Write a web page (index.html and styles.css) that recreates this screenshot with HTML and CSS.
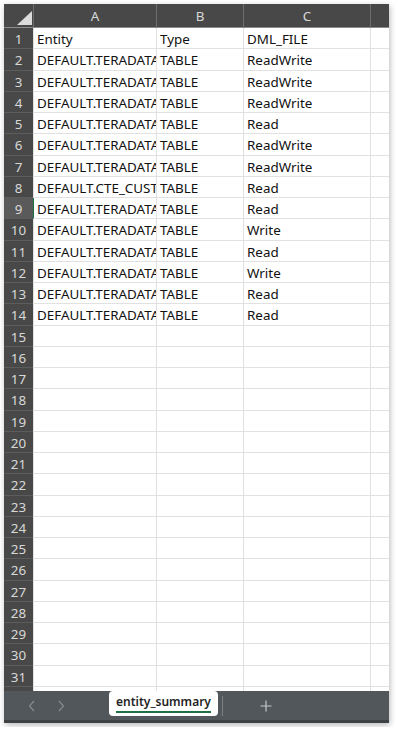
FILE: index.html
```html
<!DOCTYPE html>
<html>
<head>
    <title>entity_summary</title>
    <meta name="viewport" content="width=device-width, initial-scale=1.0">
    <link rel="stylesheet" href="styles.css">
</head>
<body>
    <div class="window">
        <div class="sheet" id="sheet">
            <!-- Column headers -->
            <div class="corner"><span class="corner-mark"></span></div>
            <div class="col-head">A</div>
            <div class="col-head">B</div>
            <div class="col-head">C</div>
            <div class="col-head"></div>
        </div>

        <div class="tab-bar">
            <div class="tab-nav">
                <svg width="8" height="12" viewBox="0 0 8 12"><path d="M6 1 L1.5 6 L6 11" fill="none" stroke="#878b8e" stroke-width="1.2"/></svg>
                <svg width="8" height="12" viewBox="0 0 8 12"><path d="M2 1 L6.5 6 L2 11" fill="none" stroke="#878b8e" stroke-width="1.2"/></svg>
            </div>
            <div class="tab"><span class="tab-label">entity_summary</span></div>
            <div class="tab-sep"></div>
            <div class="tab-add">
                <svg width="12" height="12" viewBox="0 0 12 12"><path d="M6 0.5 V11.5 M0.5 6 H11.5" stroke="#c4c7c9" stroke-width="1.2"/></svg>
            </div>
        </div>
        <div class="bottom-strip"></div>
    </div>

    <script>
        const rows = [
            ['Entity', 'Type', 'DML_FILE'],
            ['DEFAULT.TERADATA_TABLE', 'TABLE', 'ReadWrite'],
            ['DEFAULT.TERADATA_TABLE', 'TABLE', 'ReadWrite'],
            ['DEFAULT.TERADATA_TABLE', 'TABLE', 'ReadWrite'],
            ['DEFAULT.TERADATA_TABLE', 'TABLE', 'Read'],
            ['DEFAULT.TERADATA_TABLE', 'TABLE', 'ReadWrite'],
            ['DEFAULT.TERADATA_TABLE', 'TABLE', 'ReadWrite'],
            ['DEFAULT.CTE_CUSTOMER', 'TABLE', 'Read'],
            ['DEFAULT.TERADATA_TABLE', 'TABLE', 'Read'],
            ['DEFAULT.TERADATA_TABLE', 'TABLE', 'Write'],
            ['DEFAULT.TERADATA_TABLE', 'TABLE', 'Read'],
            ['DEFAULT.TERADATA_TABLE', 'TABLE', 'Write'],
            ['DEFAULT.TERADATA_TABLE', 'TABLE', 'Read'],
            ['DEFAULT.TERADATA_TABLE', 'TABLE', 'Read']
        ];
        const totalRows = 32;
        const activeRow = 9;

        const sheet = document.getElementById('sheet');
        for (let i = 1; i <= totalRows; i++) {
            const data = rows[i - 1] || ['', '', ''];

            const head = document.createElement('div');
            head.className = 'row-head' + (i === activeRow ? ' active' : '');
            head.textContent = i;
            sheet.appendChild(head);

            data.concat(['']).forEach((value, index) => {
                const cell = document.createElement('div');
                cell.className = 'cell';
                if (i === activeRow && index === 0) {
                    cell.classList.add('active');
                }
                cell.textContent = value;
                sheet.appendChild(cell);
            });
        }
    </script>
</body>
</html>
```

FILE: styles.css
```css
body {
    margin: 0;
    background: #ffffff;
    font-family: "Noto Sans", "Open Sans", sans-serif;
}

.window {
    margin: 4px;
    width: 385px;
    height: 719px;
    display: flex;
    flex-direction: column;
    background: #ffffff;
    box-shadow: 1px 2px 6px rgba(0, 0, 0, 0.28);
}

.sheet {
    height: 687px;
    overflow: hidden;
    display: grid;
    grid-template-columns: 29px 123px 87px 127px 19px;
    grid-auto-rows: 21.25px;
    grid-template-rows: 24px;
    font-size: 13.4px;
}

.corner {
    background: #484848;
    border-bottom: 1px solid #8c8c8c;
    position: relative;
}

.corner-mark {
    position: absolute;
    right: 1px;
    bottom: 2px;
    width: 0;
    height: 0;
    border-left: 15px solid transparent;
    border-bottom: 14px solid #dcdcdc;
}

.col-head {
    background: #484848;
    color: #d8d8d8;
    border-left: 1px solid #6c6c6c;
    border-bottom: 1px solid #8c8c8c;
    display: flex;
    align-items: center;
    justify-content: center;
    padding-top: 1px;
}

.row-head {
    background: #484848;
    color: #d8d8d8;
    border-bottom: 1px solid #5c5c5c;
    display: flex;
    align-items: center;
    justify-content: center;
    box-sizing: border-box;
    padding-top: 2px;
}

.row-head.active {
    background: #5a5a5a;
}

.cell {
    color: #111111;
    border-left: 1px solid #e1e1e1;
    border-bottom: 1px solid #e1e1e1;
    padding: 2px 0 0 3px;
    white-space: nowrap;
    overflow: hidden;
    display: flex;
    align-items: center;
    box-sizing: border-box;
}

.cell.active {
    border-left: 1px solid #1e7145;
}

.tab-bar {
    height: 29px;
    background: #52575b;
    display: flex;
    align-items: center;
}

.tab-nav {
    width: 105px;
    box-sizing: border-box;
    display: flex;
    gap: 21px;
    padding-left: 24px;
}

.tab {
    width: 109px;
    height: 25px;
    margin-top: -4px;
    background: #ffffff;
    border-radius: 4px;
    display: flex;
    justify-content: center;
    align-items: center;
}

.tab-label {
    font-size: 12px;
    font-weight: 600;
    color: #1f1f1f;
    padding-bottom: 1px;
    border-bottom: 2px solid #1e7145;
    line-height: 16px;
}

.tab-sep {
    width: 1px;
    height: 20px;
    margin-left: 4px;
    background: #7c8083;
}

.tab-add {
    margin-left: 37px;
    display: flex;
}

.bottom-strip {
    height: 3px;
    background: #3f4244;
}
```
